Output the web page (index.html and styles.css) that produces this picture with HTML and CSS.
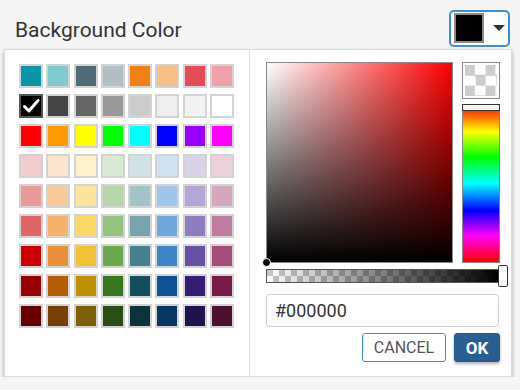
FILE: index.html
```html
<!DOCTYPE html>
<html>
<head>
<meta charset="utf-8">
<link rel="stylesheet" href="styles.css">
</head>
<body>
<div class="header">
  <div class="title">Background Color</div>
  <button class="color-btn">
    <span class="current"></span>
    <span class="caret"></span>
  </button>
</div>
<div class="panel">
  <div class="palette">
    <span class="sw" style="background:#0996a6"></span>
    <span class="sw" style="background:#80cad3"></span>
    <span class="sw" style="background:#4e6b77"></span>
    <span class="sw" style="background:#b1bec5"></span>
    <span class="sw" style="background:#ef8117"></span>
    <span class="sw" style="background:#f5bf86"></span>
    <span class="sw" style="background:#e54b55"></span>
    <span class="sw" style="background:#f3a1a9"></span>

    <span class="sw selected" style="background:#000000"><svg viewBox="0 0 20 20" width="20" height="20"><path d="M3.5 10.5 L8 15 L17 4.5" fill="none" stroke="#fff" stroke-width="3" stroke-linecap="round" stroke-linejoin="round"/></svg></span>
    <span class="sw" style="background:#444444"></span>
    <span class="sw" style="background:#666666"></span>
    <span class="sw" style="background:#999999"></span>
    <span class="sw" style="background:#cccccc"></span>
    <span class="sw" style="background:#eeeeee"></span>
    <span class="sw" style="background:#f3f3f3"></span>
    <span class="sw" style="background:#ffffff"></span>

    <span class="sw" style="background:#ff0000"></span>
    <span class="sw" style="background:#ff9900"></span>
    <span class="sw" style="background:#ffff00"></span>
    <span class="sw" style="background:#00ff00"></span>
    <span class="sw" style="background:#00ffff"></span>
    <span class="sw" style="background:#0000ff"></span>
    <span class="sw" style="background:#9900ff"></span>
    <span class="sw" style="background:#ff00ff"></span>

    <span class="sw" style="background:#f4cccc"></span>
    <span class="sw" style="background:#fce5cd"></span>
    <span class="sw" style="background:#fff2cc"></span>
    <span class="sw" style="background:#d9ead3"></span>
    <span class="sw" style="background:#d0e0e3"></span>
    <span class="sw" style="background:#cfe2f3"></span>
    <span class="sw" style="background:#d9d2e9"></span>
    <span class="sw" style="background:#ead1dc"></span>

    <span class="sw" style="background:#ea9999"></span>
    <span class="sw" style="background:#f9cb9c"></span>
    <span class="sw" style="background:#ffe599"></span>
    <span class="sw" style="background:#b6d7a8"></span>
    <span class="sw" style="background:#a2c4c9"></span>
    <span class="sw" style="background:#9fc5e8"></span>
    <span class="sw" style="background:#b4a7d6"></span>
    <span class="sw" style="background:#d5a6bd"></span>

    <span class="sw" style="background:#e06666"></span>
    <span class="sw" style="background:#f6b26b"></span>
    <span class="sw" style="background:#ffd966"></span>
    <span class="sw" style="background:#93c47d"></span>
    <span class="sw" style="background:#76a5af"></span>
    <span class="sw" style="background:#6fa8dc"></span>
    <span class="sw" style="background:#8e7cc3"></span>
    <span class="sw" style="background:#c27ba0"></span>

    <span class="sw" style="background:#cc0000"></span>
    <span class="sw" style="background:#e69138"></span>
    <span class="sw" style="background:#f1c232"></span>
    <span class="sw" style="background:#6aa84f"></span>
    <span class="sw" style="background:#45818e"></span>
    <span class="sw" style="background:#3d85c6"></span>
    <span class="sw" style="background:#674ea7"></span>
    <span class="sw" style="background:#a64d79"></span>

    <span class="sw" style="background:#990000"></span>
    <span class="sw" style="background:#b45f06"></span>
    <span class="sw" style="background:#bf9000"></span>
    <span class="sw" style="background:#38761d"></span>
    <span class="sw" style="background:#134f5c"></span>
    <span class="sw" style="background:#0b5394"></span>
    <span class="sw" style="background:#351c75"></span>
    <span class="sw" style="background:#741b47"></span>

    <span class="sw" style="background:#660000"></span>
    <span class="sw" style="background:#783f04"></span>
    <span class="sw" style="background:#7f6000"></span>
    <span class="sw" style="background:#274e13"></span>
    <span class="sw" style="background:#0c343d"></span>
    <span class="sw" style="background:#073763"></span>
    <span class="sw" style="background:#20124d"></span>
    <span class="sw" style="background:#4c1130"></span>
  </div>
  <div class="picker">
    <div class="picker-top">
      <div class="satval">
        <span class="sv-dot"></span>
      </div>
      <div class="side">
        <div class="preview"></div>
        <div class="hue">
          <span class="hue-handle"></span>
        </div>
      </div>
    </div>
    <div class="alpha">
      <div class="alpha-fill"></div>
      <span class="alpha-handle"></span>
    </div>
    <input class="hex" type="text" value="#000000">
    <div class="actions">
      <button class="btn cancel">CANCEL</button>
      <button class="btn ok">OK</button>
    </div>
  </div>
</div>
</body>
</html>
```
FILE: styles.css
```css
* { box-sizing: border-box; }

body {
  margin: 0;
  background: #f5f5f5;
  font-family: Roboto, "Liberation Sans", sans-serif;
  color: #333;
}

.header {
  height: 49px;
  display: flex;
  align-items: center;
  justify-content: space-between;
  padding: 0 10px 0 15px;
}

.title {
  font-size: 21px;
  color: #333;
  margin-top: 10px;
}

.color-btn {
  width: 61px;
  height: 37px;
  margin-top: 7px;
  border: 2px solid #3b8ed8;
  border-radius: 5px;
  background: #fff;
  display: flex;
  align-items: center;
  padding: 0 0 0 3px;
}

.current {
  width: 30px;
  height: 30px;
  background: #000;
  border: 2px solid #8a8a8a;
}

.caret {
  width: 0;
  height: 0;
  margin-left: 9px;
  border-left: 6px solid transparent;
  border-right: 6px solid transparent;
  border-top: 6px solid #333;
}

.panel {
  margin: 0 8px 0 4px;
  height: 328px;
  background: #fff;
  border: 1px solid #dcdcdc;
  display: flex;
  box-shadow: 0 3px 4px rgba(0, 0, 0, 0.35);
}

.palette {
  width: 245px;
  border-right: 1px solid #dcdcdc;
  padding: 14px 0 0 14px;
  display: grid;
  grid-template-columns: repeat(8, 24px);
  grid-auto-rows: 24px;
  column-gap: 3.3px;
  row-gap: 6px;
  align-content: start;
}

.sw {
  display: block;
  width: 24px;
  height: 24px;
  border: 2px solid #d3d3d3;
}

.sw.selected {
  border-color: #555;
  display: flex;
  align-items: center;
  justify-content: center;
}

.picker {
  flex: 1;
  padding: 12px 11px 0 16px;
}

.picker-top {
  display: flex;
  gap: 9px;
}

.satval {
  position: relative;
  width: 187px;
  height: 201px;
  border: 1px solid #888;
  background:
    linear-gradient(to bottom, rgba(0,0,0,0), #000),
    linear-gradient(to right, #fff, rgba(255,255,255,0)),
    #ff0000;
}

.sv-dot {
  position: absolute;
  left: -5px;
  bottom: -5px;
  width: 9px;
  height: 9px;
  border-radius: 50%;
  background: #000;
  border: 1px solid #fff;
}

.side {
  width: 38px;
  display: flex;
  flex-direction: column;
  gap: 5px;
}

.preview {
  height: 37px;
  border: 1px solid #888;
  padding: 2px;
  background-color: #fff;
  background-image: repeating-conic-gradient(#fff 0 25%, #cccccc 0 50%);
  background-size: 20.6px 20.6px;
  background-origin: content-box;
  background-clip: content-box;
}

.hue {
  position: relative;
  height: 159px;
  border: 1px solid #888;
  background: linear-gradient(to bottom, #ff0000 0%, #ffff00 17%, #00ff00 33%, #00ffff 50%, #0000ff 67%, #ff00ff 83%, #ff0000 100%);
}

.hue-handle {
  position: absolute;
  left: -1px;
  right: -1px;
  top: -1px;
  height: 7px;
  background: #f2f2f2;
  border: 1px solid #333;
}

.alpha {
  position: relative;
  margin-top: 6px;
  width: 234px;
  height: 14px;
  border: 1px solid #555;
  background-color: #fff;
  background-image: repeating-conic-gradient(#fff 0 25%, #c8c8c8 0 50%);
  background-size: 12px 12px;
}

.alpha-fill {
  position: absolute;
  inset: 0;
  background: linear-gradient(to right, rgba(0,0,0,0), #000);
}

.alpha-handle {
  position: absolute;
  right: -9px;
  top: -5px;
  width: 10px;
  height: 22px;
  background: #fff;
  border: 1px solid #333;
  border-radius: 2px;
}

.hex {
  display: block;
  margin-top: 11px;
  width: 233px;
  height: 33px;
  border: 1px solid #ccc;
  border-radius: 4px;
  padding: 0 8px;
  font-family: Roboto, "Liberation Sans", sans-serif;
  font-size: 18px;
  color: #333;
  outline: none;
}

.actions {
  width: 234px;
  margin-top: 6px;
  display: flex;
  justify-content: flex-end;
  gap: 8px;
}

.btn {
  height: 29px;
  border-radius: 3px;
  font-family: Roboto, "Liberation Sans", sans-serif;
  padding: 0;
}

.cancel {
  width: 84px;
  border: 1px solid #3b8ed8;
  background: #fff;
  color: #555;
  font-size: 16px;
}

.ok {
  width: 46px;
  border: 1px solid #235c8c;
  background: #285f90;
  color: #fff;
  font-size: 17px;
  font-weight: bold;
  box-shadow: 0 2px 3px rgba(0, 0, 0, 0.3);
}
```
